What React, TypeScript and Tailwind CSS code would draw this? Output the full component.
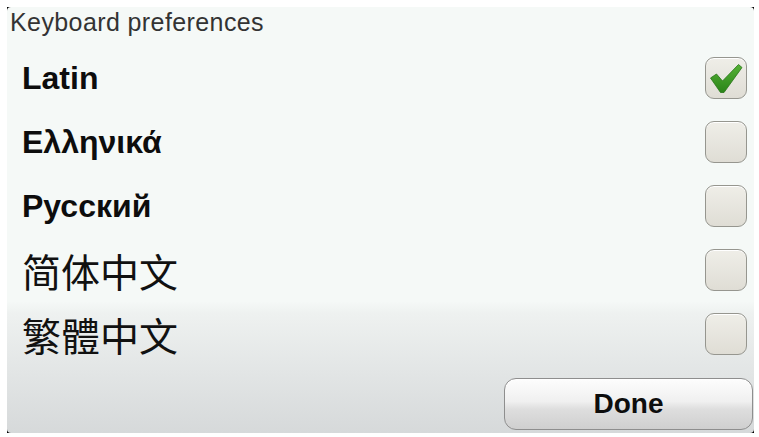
// Keyboard preferences screen: language list with checkboxes and a Done button.

import { useState } from 'react'

const LANGUAGES = [
  { id: 'latin', label: 'Latin', cjk: false },
  { id: 'greek', label: 'Ελληνικά', cjk: false },
  { id: 'russian', label: 'Русский', cjk: false },
  { id: 'zh-hans', label: '简体中文', cjk: true },
  { id: 'zh-hant', label: '繁體中文', cjk: true },
]

function CheckBox({ checked, onToggle }: { checked: boolean; onToggle: () => void }) {
  return (
    <button
      type="button"
      role="checkbox"
      aria-checked={checked}
      onClick={onToggle}
      className="w-[42px] h-[42px] rounded-[9px] border-[1.5px] border-[#96968f] bg-[linear-gradient(to_bottom,#efeee8,#dfddd5)] shadow-[inset_0_1px_0_#ffffff] flex items-center justify-center"
    >
      {checked && (
        <svg width="34" height="31" viewBox="0 0 34 31" aria-hidden="true">
          <defs>
            <linearGradient id="tick" x1="0" y1="0" x2="0" y2="1">
              <stop offset="0" stopColor="#56b236" />
              <stop offset="1" stopColor="#2a8419" />
            </linearGradient>
          </defs>
          <path
            d="M1.5 15 L7.5 11 L13.5 18 L29.5 1.5 L33 4.5 L15 29.5 L11.5 29.5 Z"
            fill="url(#tick)"
            stroke="#277517"
            strokeWidth="0.8"
            strokeLinejoin="round"
          />
        </svg>
      )}
    </button>
  )
}

export default function App() {
  const [selected, setSelected] = useState<Record<string, boolean>>({ latin: true })

  return (
    <div className="w-[759px] h-[437px] bg-white pt-[7px] pl-[7px] pr-[5px] pb-[4px]">
      <div className="h-full bg-black">
        <div className="h-full rounded-[4px] flex flex-col bg-[linear-gradient(to_bottom,#f5f9f7_0%,#f5f9f7_69%,#eef1f0_72%,#d6d9da_100%)]">
          <div className="h-[39px] pt-[3px] pl-[3px]">
            <h1 className="font-['Liberation_Sans',Arial,sans-serif] text-[25px] leading-none tracking-[0.4px] text-[#333333]">
              Keyboard preferences
            </h1>
          </div>

          <ul className="flex flex-col">
            {LANGUAGES.map((lang) => (
              <li key={lang.id} className="h-[64px] flex items-center justify-between pl-[15px] pr-[7px]">
                {lang.cjk ? (
                  <span className="font-['Noto_Sans_CJK_SC','Noto_Sans_CJK_TC',sans-serif] text-[39px] leading-none font-normal text-[#111111]">
                    {lang.label}
                  </span>
                ) : (
                  <span className="font-['Liberation_Sans',Arial,sans-serif] text-[32px] leading-none font-bold text-[#0d0d0d]">
                    {lang.label}
                  </span>
                )}
                <CheckBox
                  checked={!!selected[lang.id]}
                  onToggle={() => setSelected((s) => ({ ...s, [lang.id]: !s[lang.id] }))}
                />
              </li>
            ))}
          </ul>

          <div className="mt-auto flex justify-end pb-[3px] pr-[1px]">
            <button
              type="button"
              className="w-[249px] h-[52px] rounded-[12px] border border-[#8e8e8e] bg-[linear-gradient(to_bottom,#fdfdfd_0%,#f0f0f0_45%,#dedede_60%,#cfcfcf_100%)] shadow-[inset_0_1px_0_#ffffff] font-['Liberation_Sans',Arial,sans-serif] text-[28px] font-bold leading-none text-[#0d0d0d]"
            >
              Done
            </button>
          </div>
        </div>
      </div>
    </div>
  )
}
